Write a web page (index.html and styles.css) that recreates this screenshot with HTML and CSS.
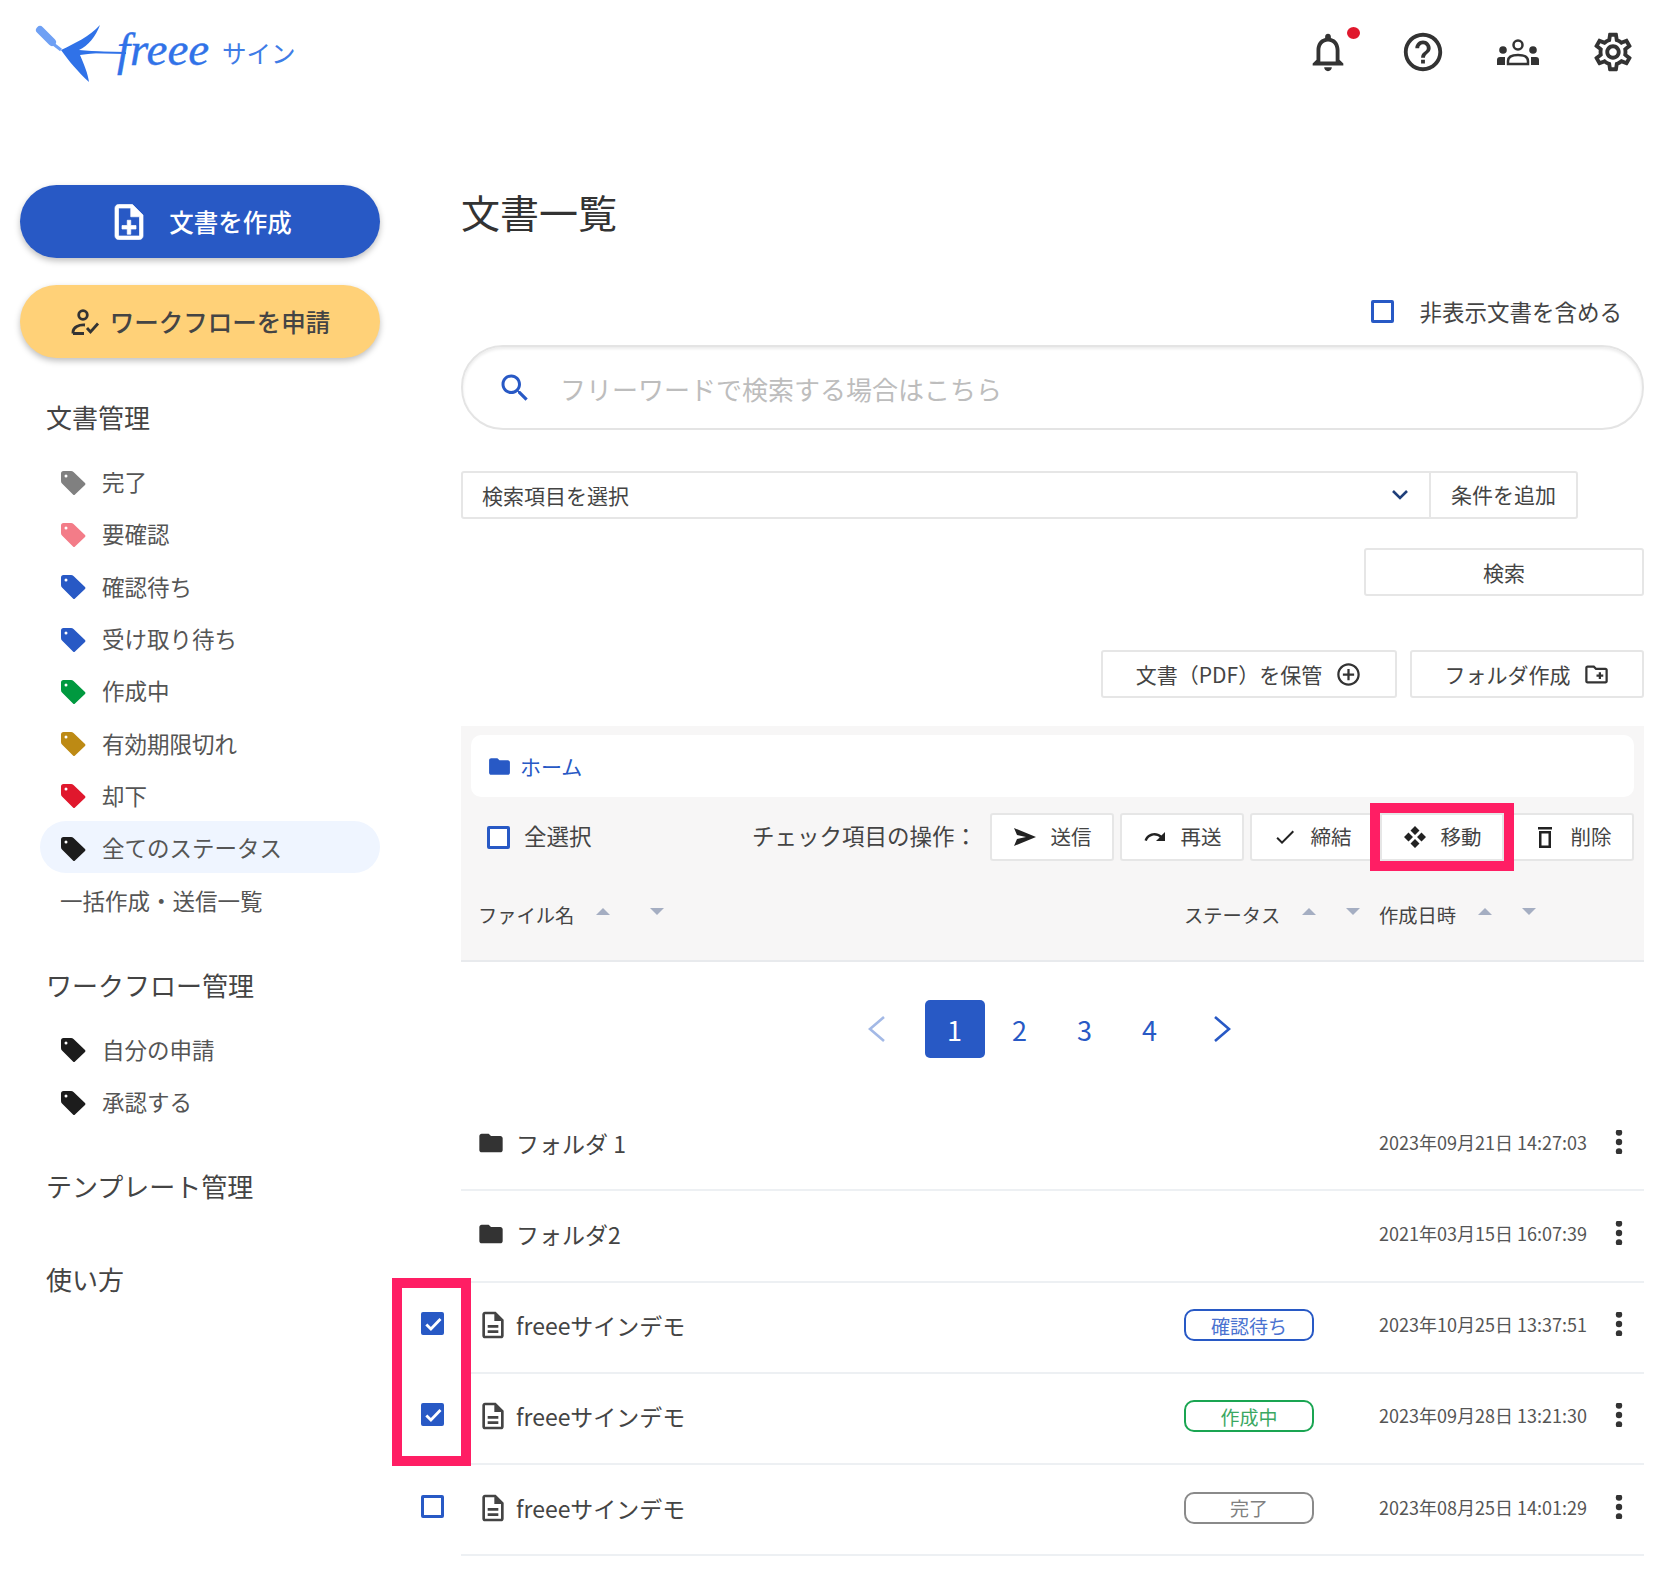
FILE: index.html
```html
<!DOCTYPE html>
<html lang="ja">
<head>
  <meta charset="UTF-8">
  <title>freeeサイン 文書一覧</title>
  <link rel="stylesheet" href="styles.css">
</head>
<body>

<!-- shared icons -->
<svg class="sprite" aria-hidden="true">
  <symbol id="i-tag" viewBox="0 0 26 26"><path fill="currentColor" d="M1 3.5Q1 1 3.500 1H11Q12.500 1 13.500 2L25 13Q26 14 25 15L15 24.500Q14 25.500 13 24.500L2 13.500Q1 12.500 1 11Z"/><circle cx="6" cy="6" r="1.500" fill="#fff"/></symbol>
  <symbol id="i-folder" viewBox="0 0 24 24"><path fill="currentColor" d="M10 4H4c-1.100 0-1.990.9-1.990 2L2 18c0 1.100.9 2 2 2h16c1.100 0 2-.9 2-2V8c0-1.100-.9-2-2-2h-8l-2-2z"/></symbol>
  <symbol id="i-doc" viewBox="0 0 24 24"><path fill="currentColor" d="M8 16h8v2H8zm0-4h8v2H8zm6-10H6c-1.100 0-2 .9-2 2v16c0 1.100.89 2 1.990 2H18c1.100 0 2-.9 2-2V8l-6-6zm4 18H6V4h7v5h5v11z"/></symbol>
  <symbol id="i-more" viewBox="0 0 24 24"><circle cx="12" cy="2.500" r="3.200" fill="currentColor"/><circle cx="12" cy="12" r="3.200" fill="currentColor"/><circle cx="12" cy="21.500" r="3.200" fill="currentColor"/></symbol>
  <symbol id="i-tick" viewBox="0 0 24 24"><path fill="none" stroke="#fff" stroke-width="3.400" d="M4 12.500l5.500 5.500L21 6"/></symbol>
</svg>

<header class="topbar">
  <svg class="logo" viewBox="0 0 270 64" width="270" height="64">
    <path d="M6 8L18 20" stroke="#6fa0f4" stroke-width="8" stroke-linecap="round" fill="none"/>
    <path d="M18 21L27 28" stroke="#6fa0f4" stroke-width="3" fill="none"/>
    <path d="M27 28C40 22 56 14 66 3C62 14 54 24 45 28L70 30L46 33C50 42 54 52 55 60C44 50 34 38 27 28Z" fill="#3072e8"/>
    <path d="M45 30L92 31" stroke="#3072e8" stroke-width="2" fill="none"/>
    <text x="83" y="43" class="logo-word">freee</text>
    <text x="188" y="41" class="logo-sign">サイン</text>
  </svg>
  <nav class="top-icons">
    <span class="bell">
      <svg width="46" height="46" viewBox="0 0 24 24"><path fill="#333" d="M12 22c1.100 0 2-.9 2-2h-4c0 1.100.9 2 2 2zm6-6v-5c0-3.070-1.630-5.640-4.500-6.320V4c0-.83-.67-1.500-1.500-1.500s-1.500.67-1.500 1.500v.68C7.640 5.360 6 7.920 6 11v5l-2 2v1h16v-1l-2-2zm-2 1H8v-6c0-2.480 1.510-4.500 4-4.500s4 2.020 4 4.500v6z"/></svg>
      <i class="bell-dot"></i>
    </span>
    <svg width="46" height="46" viewBox="0 0 24 24"><path fill="#333" d="M11 18h2v-2h-2v2zm1-16C6.480 2 2 6.480 2 12s4.480 10 10 10 10-4.480 10-10S17.520 2 12 2zm0 18c-4.410 0-8-3.590-8-8s3.590-8 8-8 8 3.590 8 8-3.590 8-8 8zm0-14c-2.210 0-4 1.790-4 4h2c0-1.100.9-2 2-2s2 .9 2 2c0 2-3 1.750-3 5h2c0-2.250 3-2.500 3-5 0-2.210-1.790-4-4-4z"/></svg>
    <svg width="46" height="46" viewBox="0 0 46 46">
      <circle cx="23" cy="16" r="4.500" fill="none" stroke="#333" stroke-width="2.500"/>
      <path d="M13 35V32Q13 26 23 26T33 32V35Z" fill="#fff" stroke="#333" stroke-width="2.500"/>
      <circle cx="8" cy="21" r="3.800" fill="#333"/><circle cx="38" cy="21" r="3.800" fill="#333"/>
      <path d="M2 36V31Q2 28 5 28H10V36ZM44 36V31Q44 28 41 28H36V36Z" fill="#333"/>
    </svg>
    <svg width="46" height="46" viewBox="0 0 24 24"><path fill="#333" d="M19.430 12.980c.04-.32.07-.64.07-.98 0-.34-.03-.66-.07-.98l2.110-1.650c.19-.15.24-.42.12-.64l-2-3.460c-.09-.16-.26-.25-.44-.25-.06 0-.12.01-.17.03l-2.490 1c-.52-.4-1.080-.73-1.690-.98l-.38-2.650C14.460 2.180 14.250 2 14 2h-4c-.25 0-.46.18-.49.42l-.38 2.650c-.61.25-1.170.59-1.690.98l-2.490-1c-.06-.02-.12-.03-.18-.03-.17 0-.34.09-.43.25l-2 3.460c-.13.22-.07.49.12.64l2.110 1.650c-.04.32-.07.65-.07.98 0 .33.03.66.07.98l-2.110 1.650c-.19.15-.24.42-.12.64l2 3.460c.09.16.26.25.44.25.06 0 .12-.01.17-.03l2.490-1c.52.4 1.080.73 1.690.98l.38 2.650c.03.24.24.42.49.42h4c.25 0 .46-.18.49-.42l.38-2.650c.61-.25 1.170-.59 1.690-.98l2.490 1c.06.02.12.03.18.03.17 0 .34-.09.43-.25l2-3.460c.12-.22.07-.49-.12-.64l-2.110-1.650zm-1.980-1.710c.04.31.05.52.05.73 0 .21-.02.43-.05.73l-.14 1.130.89.7 1.080.84-.7 1.210-1.270-.51-1.040-.42-.9.68c-.43.32-.84.56-1.250.73l-1.060.43-.16 1.130-.2 1.350h-1.400l-.19-1.350-.16-1.130-1.060-.43c-.43-.18-.83-.41-1.230-.71l-.91-.7-1.060.43-1.270.51-.7-1.210 1.080-.84.89-.7-.14-1.130c-.03-.31-.05-.54-.05-.74s.02-.43.05-.73l.14-1.130-.89-.7-1.080-.84.7-1.210 1.270.51 1.040.42.9-.68c.43-.32.84-.56 1.250-.73l1.060-.43.16-1.130.2-1.350h1.390l.19 1.350.16 1.130 1.060.43c.43.18.83.41 1.230.71l.91.7 1.060-.43 1.270-.51.7 1.210-1.070.85-.89.7.14 1.130zM12 8c-2.210 0-4 1.790-4 4s1.790 4 4 4 4-1.790 4-4-1.790-4-4-4zm0 6c-1.100 0-2-.9-2-2s.9-2 2-2 2 .9 2 2-.9 2-2 2z"/></svg>
  </nav>
</header>

<div class="layout">
  <!-- Sidebar -->
  <aside class="sidebar">
    <a class="cta cta-blue">
      <svg width="42" height="42" viewBox="0 0 24 24"><path fill="#fff" stroke="#fff" stroke-width=".4" d="M13 11h-2v3H8v2h3v3h2v-3h3v-2h-3zm1-9H6c-1.100 0-2 .9-2 2v16c0 1.100.89 2 1.990 2H18c1.100 0 2-.9 2-2V8l-6-6zm4 18H6V4h7v5h5v11z"/></svg>
      文書を作成
    </a>
    <a class="cta cta-yellow">
      <svg width="30" height="26" viewBox="0 0 30 26" fill="none" stroke="#333" stroke-width="2.800"><circle cx="13" cy="6" r="4.300"/><path d="M3 24.500H14M3 24.500V23C3 18 9 15.500 15 16"/><path d="M17 19l3.500 4L28 14.500"/></svg>
      ワークフローを申請
    </a>

    <h2 class="nav-title">文書管理</h2>
    <ul class="nav-list">
      <li class="nav-item"><svg class="tag tag-gray"><use href="#i-tag"/></svg>完了</li>
      <li class="nav-item"><svg class="tag tag-pink"><use href="#i-tag"/></svg>要確認</li>
      <li class="nav-item"><svg class="tag tag-blue"><use href="#i-tag"/></svg>確認待ち</li>
      <li class="nav-item"><svg class="tag tag-blue"><use href="#i-tag"/></svg>受け取り待ち</li>
      <li class="nav-item"><svg class="tag tag-green"><use href="#i-tag"/></svg>作成中</li>
      <li class="nav-item"><svg class="tag tag-ochre"><use href="#i-tag"/></svg>有効期限切れ</li>
      <li class="nav-item"><svg class="tag tag-red"><use href="#i-tag"/></svg>却下</li>
      <li class="nav-item active"><svg class="tag tag-black"><use href="#i-tag"/></svg>全てのステータス</li>
      <li class="nav-item">一括作成・送信一覧</li>
    </ul>

    <h2 class="nav-title">ワークフロー管理</h2>
    <ul class="nav-list">
      <li class="nav-item"><svg class="tag tag-black"><use href="#i-tag"/></svg>自分の申請</li>
      <li class="nav-item"><svg class="tag tag-black"><use href="#i-tag"/></svg>承認する</li>
    </ul>

    <h2 class="nav-title">テンプレート管理</h2>
    <h2 class="nav-title nav-title-last">使い方</h2>
  </aside>

  <!-- Main content -->
  <main class="main">
    <h1 class="page-title">文書一覧</h1>

    <div class="hidden-option">
      <span class="checkbox"></span>
      <span>非表示文書を含める</span>
    </div>

    <div class="search-box">
      <svg width="36" height="36" viewBox="0 0 24 24"><path fill="#2859c5" d="M15.500 14h-.79l-.28-.27C15.410 12.590 16 11.110 16 9.500 16 5.910 13.090 3 9.500 3S3 5.910 3 9.500 5.910 16 9.500 16c1.610 0 3.090-.59 4.230-1.570l.27.28v.79l5 4.990L20.490 19l-4.990-5zm-6 0C7.010 14 5 11.990 5 9.500S7.010 5 9.500 5 14 7.010 14 9.500 11.990 14 9.500 14z"/></svg>
      <input class="search-input" type="text" placeholder="フリーワードで検索する場合はこちら">
    </div>

    <div class="condition-row">
      <div class="condition-select">
        <span>検索項目を選択</span>
        <svg width="20" height="12" viewBox="0 0 20 12" fill="none" stroke="#1f3f7a" stroke-width="2.600"><path d="M3 2l7 7 7-7"/></svg>
      </div>
      <div class="condition-add">条件を追加</div>
    </div>

    <div class="search-action">
      <div class="btn search-btn">検索</div>
    </div>

    <div class="doc-actions">
      <div class="btn doc-pdf">
        文書（PDF）を保管
        <svg width="27" height="27" viewBox="0 0 24 24"><path fill="#333" d="M13 7h-2v4H7v2h4v4h2v-4h4v-2h-4V7zm-1-5C6.480 2 2 6.480 2 12s4.480 10 10 10 10-4.480 10-10S17.520 2 12 2zm0 18c-4.410 0-8-3.590-8-8s3.590-8 8-8 8 3.590 8 8-3.590 8-8 8z"/></svg>
      </div>
      <div class="btn doc-folder">
        フォルダ作成
        <svg width="27" height="27" viewBox="0 0 24 24"><path fill="#333" d="M20 6h-8l-2-2H4c-1.110 0-1.990.89-1.990 2L2 18c0 1.110.89 2 2 2h16c1.110 0 2-.89 2-2V8c0-1.110-.89-2-2-2zm0 12H4V6h5.170l2 2H20v10zm-8-4h2v2h2v-2h2v-2h-2v-2h-2v2h-2z"/></svg>
      </div>
    </div>

    <section class="panel">
      <div class="breadcrumb">
        <svg width="25" height="25" viewBox="0 0 24 24" class="crumb-icon"><use href="#i-folder"/></svg>
        ホーム
      </div>

      <div class="tools">
        <span class="checkbox"></span>
        <span class="select-all">全選択</span>
        <span class="tools-label">チェック項目の操作：</span>
        <div class="btn tool-btn">
          <svg width="24" height="24" viewBox="0 0 24 24"><path fill="#222" d="M1 3l22 9L1 21l3-7 9-2-9-2z"/></svg>送信
        </div>
        <div class="btn tool-btn">
          <svg width="24" height="24" viewBox="0 0 24 24"><path fill="#222" d="M18.400 10.600C16.550 9 14.150 8 11.500 8c-4.650 0-8.580 3.030-9.960 7.220L3.900 16c1.050-3.190 4.050-5.500 7.600-5.500 1.950 0 3.730.72 5.120 1.880L13 16h9V7l-3.600 3.600z"/></svg>再送
        </div>
        <div class="btn tool-btn">
          <svg width="24" height="24" viewBox="0 0 24 24"><path fill="#222" d="M9 16.170L4.830 12l-1.410 1.410L9 19 21 7l-1.410-1.410z"/></svg>締結
        </div>
        <div class="btn tool-btn tool-marked">
          <svg width="24" height="24" viewBox="0 0 24 24"><path fill="#222" d="M12 1l4.500 4.500L12 10 7.500 5.500zM5.500 7.500L10 12l-4.500 4.500L1 12zM18.500 7.500L23 12l-4.500 4.500L14 12zM12 14l4.500 4.500L12 23l-4.500-4.500z"/></svg>移動
        </div>
        <div class="btn tool-btn">
          <svg width="24" height="24" viewBox="0 0 24 24"><path fill="#222" d="M5 2h14v2.500H5zM6 6h12v17H6zm2.500 2.500v12h7v-12z"/></svg>削除
        </div>
      </div>

      <div class="table-head">
        <div class="head-cell">ファイル名
          <span class="sort sort-wide"><i class="arrow-up"></i><i class="arrow-down"></i></span>
        </div>
        <div class="head-cell">ステータス
          <span class="sort"><i class="arrow-up"></i><i class="arrow-down"></i></span>
        </div>
        <div class="head-cell">作成日時
          <span class="sort"><i class="arrow-up"></i><i class="arrow-down"></i></span>
        </div>
      </div>
    </section>

    <div class="pagination">
      <svg class="page-cell" width="60" height="30" viewBox="0 0 60 30" fill="none" stroke="#a3b9e6" stroke-width="2.600"><path d="M37 3L23 15l14 12"/></svg>
      <span class="page-cell current">1</span>
      <span class="page-cell">2</span>
      <span class="page-cell">3</span>
      <span class="page-cell">4</span>
      <svg class="page-cell page-next" width="60" height="30" viewBox="0 0 60 30" fill="none" stroke="#2859c5" stroke-width="2.600"><path d="M23 3l14 12-14 12"/></svg>
    </div>

    <div class="file-list">
      <div class="file-row">
        <div class="check-cell"></div>
        <div class="file-body">
          <div class="file-name"><svg class="row-folder"><use href="#i-folder"/></svg>フォルダ 1</div>
          <div></div>
          <div class="file-date">2023年09月21日 14:27:03</div>
          <svg class="row-more"><use href="#i-more"/></svg>
        </div>
      </div>
      <div class="file-row">
        <div class="check-cell"></div>
        <div class="file-body">
          <div class="file-name"><svg class="row-folder"><use href="#i-folder"/></svg>フォルダ2</div>
          <div></div>
          <div class="file-date">2021年03月15日 16:07:39</div>
          <svg class="row-more"><use href="#i-more"/></svg>
        </div>
      </div>
      <div class="file-row">
        <div class="check-cell"><span class="checkbox checked"><svg width="20" height="20"><use href="#i-tick"/></svg></span></div>
        <div class="file-body">
          <div class="file-name"><svg class="row-doc"><use href="#i-doc"/></svg>freeeサインデモ</div>
          <div><span class="status status-blue">確認待ち</span></div>
          <div class="file-date">2023年10月25日 13:37:51</div>
          <svg class="row-more"><use href="#i-more"/></svg>
        </div>
      </div>
      <div class="file-row">
        <div class="check-cell"><span class="checkbox checked"><svg width="20" height="20"><use href="#i-tick"/></svg></span></div>
        <div class="file-body">
          <div class="file-name"><svg class="row-doc"><use href="#i-doc"/></svg>freeeサインデモ</div>
          <div><span class="status status-green">作成中</span></div>
          <div class="file-date">2023年09月28日 13:21:30</div>
          <svg class="row-more"><use href="#i-more"/></svg>
        </div>
      </div>
      <div class="file-row">
        <div class="check-cell"><span class="checkbox"></span></div>
        <div class="file-body">
          <div class="file-name"><svg class="row-doc"><use href="#i-doc"/></svg>freeeサインデモ</div>
          <div><span class="status status-gray">完了</span></div>
          <div class="file-date">2023年08月25日 14:01:29</div>
          <svg class="row-more"><use href="#i-more"/></svg>
        </div>
      </div>
      <!-- annotation around the checked rows -->
      <div class="check-mark"></div>
    </div>
  </main>
</div>

</body>
</html>
```

FILE: styles.css
```css
* {
  box-sizing: border-box;
}
body {
  margin: 0;
  background: #fff;
  color: #444;
  font-family: "Noto Sans CJK JP", "Noto Sans", sans-serif;
}
ul {
  list-style: none;
  margin: 0;
  padding: 0;
}
.sprite {
  position: absolute;
  width: 0;
  height: 0;
}

/* Header */
.topbar {
  display: flex;
  justify-content: space-between;
  height: 104px;
  padding: 22px 42px 0 34px;
}
.logo-word {
  font-family: "Liberation Serif", serif;
  font-style: italic;
  font-size: 47px;
  fill: #3072e8;
  stroke: #3072e8;
  stroke-width: 0.4px;
}
.logo-sign {
  font-size: 24.5px;
  fill: #3f7ce6;
}
.top-icons {
  display: flex;
  gap: 49px;
  padding-top: 7px;
  height: 53px;
}
.bell {
  position: relative;
  height: 46px;
}
.bell-dot {
  position: absolute;
  left: 42px;
  top: -2px;
  width: 13px;
  height: 12px;
  border-radius: 50%;
  background: #e0182d;
}

/* Layout */
.layout {
  display: flex;
}

/* Sidebar */
.sidebar {
  width: 360px;
  margin-left: 20px;
  padding-top: 81px;
}
.cta {
  display: flex;
  align-items: center;
  justify-content: center;
  height: 73px;
  border-radius: 37px;
  font-size: 24.5px;
  font-weight: 500;
  box-shadow: 0 3px 6px rgba(0, 0, 0, 0.25);
}
.cta-blue {
  gap: 19px;
  background: #2859c5;
  color: #fff;
}
.cta-yellow {
  gap: 10px;
  margin-top: 27px;
  background: #ffd178;
  color: #444;
}
.nav-title {
  margin: 41px 0 0 26px;
  height: 36px;
  font-size: 26px;
  font-weight: 400;
  line-height: 36px;
  color: #444;
}
.nav-title-last {
  margin-top: 57px;
}
.nav-list {
  margin-top: 20px;
  padding-left: 20px;
}
.nav-item {
  display: flex;
  align-items: center;
  gap: 16px;
  height: 52.3px;
  padding-left: 20px;
  border-radius: 26px;
  font-size: 22.5px;
  color: #555;
}
.nav-item.active {
  background: #eff5ff;
}
.tag {
  width: 26px;
  height: 26px;
  margin-top: 3px;
}
.tag-gray { color: #808080; }
.tag-pink { color: #f37c88; }
.tag-blue { color: #2859c5; }
.tag-green { color: #00993f; }
.tag-ochre { color: #bd8a14; }
.tag-red { color: #e0182d; }
.tag-black { color: #1c1c1c; }

/* Main */
.main {
  width: 1183px;
  margin-left: 81px;
  padding-top: 79px;
}
.page-title {
  margin: 0;
  height: 56px;
  font-size: 39px;
  font-weight: 400;
  line-height: 56px;
  color: #333;
}
.hidden-option {
  display: flex;
  align-items: center;
  justify-content: flex-end;
  gap: 25px;
  height: 24px;
  margin-top: 60px;
  padding-right: 22px;
  font-size: 22.5px;
}
.checkbox {
  display: inline-flex;
  align-items: center;
  justify-content: center;
  width: 23px;
  height: 23px;
  border: 3px solid #2859c5;
  border-radius: 2px;
  background: #fff;
}
.checkbox.checked {
  background: #2859c5;
}
.checkbox svg {
  flex: none;
}
.search-box {
  display: flex;
  align-items: center;
  gap: 25px;
  height: 85px;
  margin-top: 22px;
  padding-left: 34px;
  border: 2px solid #e4e4e4;
  border-radius: 42px;
  box-shadow: inset 0 2px 3px rgba(0, 0, 0, 0.08);
}
.search-input {
  flex: 1;
  margin-top: 2px;
  border: none;
  outline: none;
  background: none;
  font-family: inherit;
  font-size: 26px;
  color: #444;
}
.search-input::placeholder {
  color: #bdbdbd;
}
.condition-row {
  display: flex;
  width: 1117px;
  height: 48px;
  margin-top: 41px;
  border: 2px solid #e6e6e6;
  border-radius: 3px;
  font-size: 21px;
}
.condition-select {
  display: flex;
  align-items: center;
  justify-content: space-between;
  flex: 1;
  padding: 0 19px 0 19px;
}
.condition-add {
  display: flex;
  align-items: center;
  justify-content: center;
  width: 147px;
  padding-bottom: 2px;
  border-left: 2px solid #e6e6e6;
}
.btn {
  display: flex;
  align-items: center;
  justify-content: center;
  height: 48px;
  border: 2px solid #e6e6e6;
  border-radius: 3px;
  background: #fff;
  font-size: 21px;
  color: #444;
}
.search-action {
  display: flex;
  justify-content: flex-end;
  margin-top: 29px;
}
.search-btn {
  width: 280px;
}
.doc-actions {
  display: flex;
  justify-content: flex-end;
  gap: 13px;
  margin-top: 54px;
}
.doc-pdf {
  width: 296px;
  gap: 13px;
}
.doc-folder {
  width: 234px;
  gap: 12px;
}

/* Panel */
.panel {
  height: 236px;
  margin-top: 28px;
  padding-top: 9px;
  border-bottom: 2px solid #e8eaed;
  background: #f7f6f6;
}
.breadcrumb {
  display: flex;
  align-items: center;
  gap: 8px;
  height: 62px;
  margin: 0 10px;
  padding-left: 16px;
  border-radius: 10px;
  background: #fff;
  font-size: 21px;
  color: #2859c5;
}
.crumb-icon {
  color: #2859c5;
}
.tools {
  display: flex;
  align-items: center;
  height: 48px;
  margin-top: 16px;
  padding: 0 10px 0 26px;
  font-size: 22.5px;
}
.select-all {
  margin: -4px 0 0 14px;
  font-size: 22.5px;
}
.tools-label {
  margin: -4px 13px 0 auto;
}
.tool-btn {
  width: 124px;
  height: 48px;
  margin-left: 6px;
  gap: 14px;
  padding-bottom: 2px;
  font-size: 20.5px;
}
.tool-btn svg {
  margin-top: 2px;
}
.tools-label + .tool-btn {
  margin-left: 0;
}
.tool-marked {
  position: relative;
  z-index: 1;
  border-radius: 0;
  outline: 10px solid #ff1e64;
}
.table-head {
  display: grid;
  grid-template-columns: 706px 195px 1fr;
  padding: 41px 0 0 17px;
  font-size: 19.3px;
  line-height: 26px;
}
.head-cell {
  display: flex;
  align-items: center;
}
.sort {
  display: flex;
  gap: 30px;
  margin-left: 22px;
  margin-top: -7px;
}
.sort-wide {
  gap: 40px;
}
.sort i {
  display: block;
  width: 0;
  height: 0;
  border-left: 7px solid transparent;
  border-right: 7px solid transparent;
}
.arrow-up {
  border-bottom: 7px solid #a5aec2;
}
.arrow-down {
  border-top: 7px solid #a5aec2;
}

/* Pagination */
.pagination {
  display: flex;
  align-items: center;
  justify-content: center;
  gap: 5px;
  height: 58px;
  margin-top: 38px;
  padding-right: 7px;
  font-size: 27px;
  color: #2859c5;
}
.page-cell {
  display: flex;
  align-items: center;
  justify-content: center;
  width: 60px;
  height: 58px;
}
svg.page-cell {
  height: 30px;
  margin-right: 13px;
}
svg.page-next {
  margin-right: 0;
  margin-left: 7px;
}
.page-cell.current {
  border-radius: 5px;
  background: #2859c5;
  color: #fff;
}

/* File list */
.file-list {
  position: relative;
  margin-top: 42px;
}
.file-row {
  display: flex;
  height: 91.25px;
  margin-left: -40px;
}
.check-cell {
  display: flex;
  align-items: center;
  width: 40px;
  padding-bottom: 9px;
}
.file-body {
  display: grid;
  grid-template-columns: 723px 195px 1fr 50px;
  align-items: center;
  flex: 1;
  padding-bottom: 4px;
  border-bottom: 2px solid #edf0f3;
}
.file-name {
  display: flex;
  align-items: center;
  padding-left: 16px;
  font-size: 23px;
  color: #444;
}
.row-folder {
  width: 28px;
  height: 28px;
  margin-right: 11px;
  color: #333;
}
.row-doc {
  width: 32px;
  height: 32px;
  margin-right: 7px;
  color: #444;
}
.status {
  display: flex;
  align-items: center;
  justify-content: center;
  width: 130px;
  height: 32px;
  border: 2px solid;
  border-radius: 10px;
  font-size: 19px;
}
.status-blue { border-color: #2859c5; color: #4a72d0; }
.status-green { border-color: #1aa552; color: #3aa862; }
.status-gray { border-color: #8a8a8a; color: #808080; }
.file-date {
  margin-top: -2px;
  font-size: 18px;
  color: #555;
}
.row-more {
  justify-self: center;
  margin-top: -2px;
  width: 24px;
  height: 24px;
  color: #333;
}
.check-mark {
  position: absolute;
  left: -69px;
  top: 178px;
  width: 79px;
  height: 188px;
  border: 10px solid #ff1e64;
}
```
